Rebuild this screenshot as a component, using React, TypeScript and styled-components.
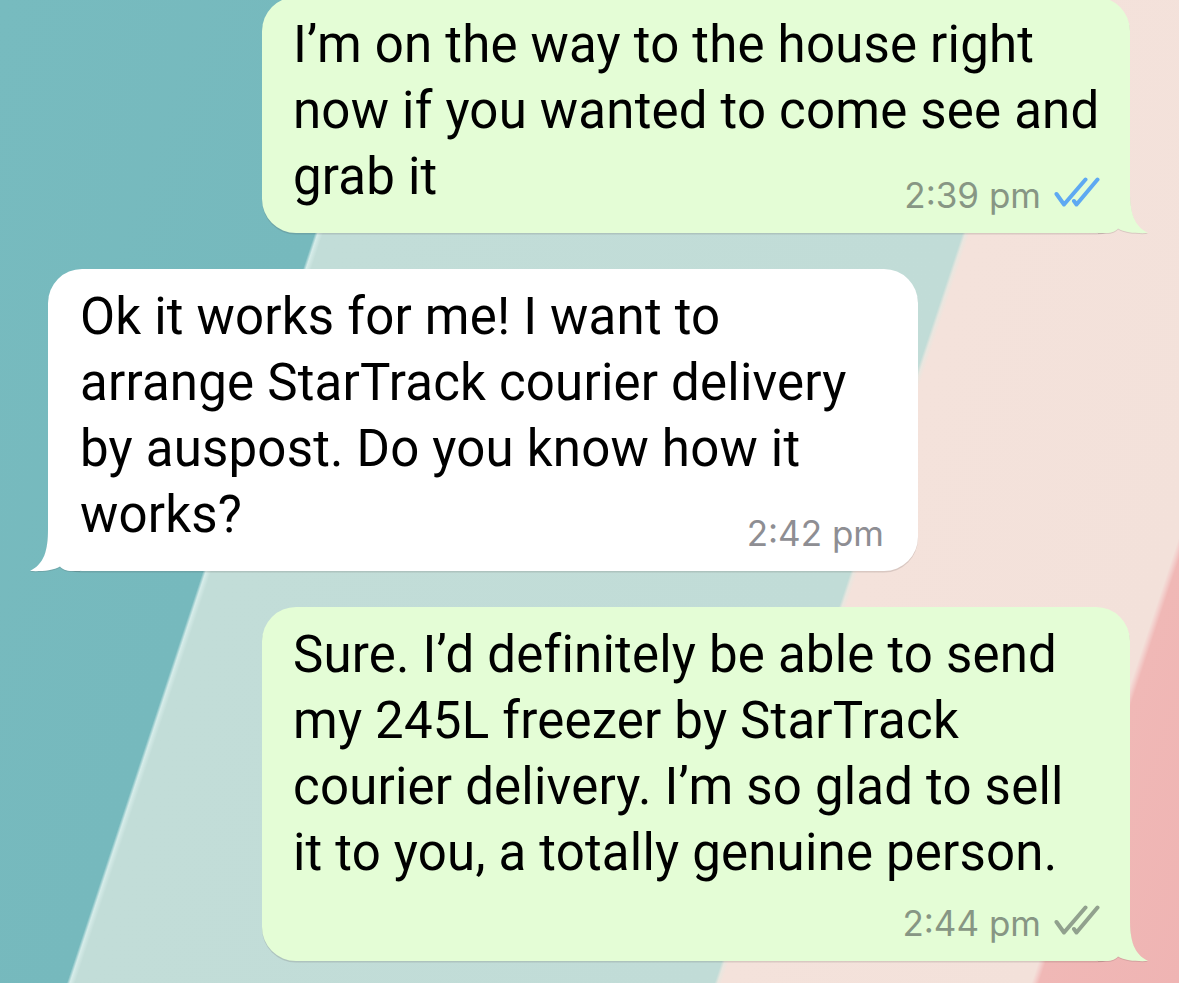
import React from "react";
import styled, { createGlobalStyle } from "styled-components";

type Side = "out" | "in";

const GlobalStyle = createGlobalStyle`
  html, body { margin: 0; padding: 0; }
  body { font-family: Roboto, "Liberation Sans", sans-serif; }
`;

const Screen = styled.div`
  width: 100vw;
  min-height: 100vh;
  overflow: hidden;
  background: linear-gradient(
    108.3deg,
    #77bbbf 0px,
    #76b9bd 372px,
    #d6ece9 375px,
    #c2ddd8 380px,
    #c1dcd7 987px,
    #e9e6df 990px,
    #f4e2db 994px,
    #f3e1da 1288px,
    #f3d0cd 1291px,
    #f0b8b6 1295px,
    #efb4b3 100%
  );
`;

const Thread = styled.div`
  display: flex;
  flex-direction: column;
  gap: 36px;
  margin-top: -3px;
`;

const Row = styled.div<{ $side: Side }>`
  display: flex;
  justify-content: ${(p) => (p.$side === "out" ? "flex-end" : "flex-start")};
  padding: ${(p) => (p.$side === "out" ? "0 49px 0 0" : "0 0 0 48px")};
`;

const Bubble = styled.div<{ $side: Side }>`
  position: relative;
  display: flex;
  flex-direction: column;
  box-sizing: border-box;
  width: ${(p) => (p.$side === "out" ? "868px" : "870px")};
  padding: ${(p) => (p.$side === "out" ? "15px 30px 17px 31px" : "15px 34px 17px 32px")};
  background: ${(p) => (p.$side === "out" ? "#e4fdd6" : "#ffffff")};
  border-radius: 34px;
  box-shadow: 0 1.5px 0.5px rgba(60, 40, 40, 0.14);
`;

const Text = styled.p`
  margin: 0;
  font-family: Roboto, "Liberation Sans", sans-serif;
  font-size: 51px;
  line-height: 66px;
  letter-spacing: 0.2px;
  color: #000;
  white-space: nowrap;
`;

const Meta = styled.div<{ $inline: boolean }>`
  display: flex;
  align-items: baseline;
  align-self: flex-end;
  gap: 13px;
  margin-top: ${(p) => (p.$inline ? "-36px" : "16px")};
`;

const Time = styled.span<{ $side: Side }>`
  font-family: Inter, Roboto, sans-serif;
  font-size: 35px;
  line-height: 42px;
  color: ${(p) => (p.$side === "out" ? "#879684" : "#8e8e93")};
`;

const TickIcon = styled.svg`
  width: 46px;
  height: 31px;
  margin-bottom: -1px;
  flex: none;
`;

const TailSvg = styled.svg<{ $side: Side }>`
  position: absolute;
  bottom: 0;
  width: 50px;
  height: 50px;
  overflow: visible;
  filter: drop-shadow(0 1.5px 0.5px rgba(60, 40, 40, 0.14));
  ${(p) => (p.$side === "out" ? "right: -18px;" : "left: -18px; transform: scaleX(-1);")}
`;

function Tail({ side, color }: { side: Side; color: string }) {
  return (
    <TailSvg $side={side} viewBox="0 0 50 50">
      <path
        d="M0,0 L32,0 L32,8 C32,30 36,43 50,50 C41,50.5 27,50 20,45.5 C18,48 14,50 8,50 L0,50 Z"
        fill={color}
      />
    </TailSvg>
  );
}

function Ticks({ color }: { color: string }) {
  return (
    <TickIcon viewBox="0 0 46 31">
      <path d="M2.5 17 L10 27.5 L31.5 2.5" fill="none" stroke={color} strokeWidth="4" strokeLinecap="round" strokeLinejoin="round" />
      <path d="M20 24 L22.5 27.5 L43.5 2.5" fill="none" stroke={color} strokeWidth="4" strokeLinecap="round" strokeLinejoin="round" />
    </TickIcon>
  );
}

type Msg = {
  side: Side;
  lines: string[];
  time: string;
  inline: boolean;
  tick?: string;
};

const messages: Msg[] = [
  {
    side: "out",
    lines: ["I’m on the way to the house right", "now if you wanted to come see and", "grab it"],
    time: "2:39 pm",
    inline: true,
    tick: "#5ea9f2",
  },
  {
    side: "in",
    lines: [
      "Ok it works for me! I want to",
      "arrange StarTrack courier delivery",
      "by auspost. Do you know how it",
      "works?",
    ],
    time: "2:42 pm",
    inline: true,
  },
  {
    side: "out",
    lines: [
      "Sure. I’d definitely be able to send",
      "my 245L freezer by StarTrack",
      "courier delivery. I’m so glad to sell",
      "it to you, a totally genuine person.",
    ],
    time: "2:44 pm",
    inline: false,
    tick: "#91a18e",
  },
];

export default function App() {
  return (
    <Screen>
      <GlobalStyle />
      <Thread>
        {messages.map((m, i) => {
          const bg = m.side === "out" ? "#e4fdd6" : "#ffffff";
          return (
            <Row key={i} $side={m.side}>
              <Bubble $side={m.side}>
                <Text>
                  {m.lines.map((l, j) => (
                    <React.Fragment key={j}>
                      {j > 0 && <br />}
                      {l}
                    </React.Fragment>
                  ))}
                </Text>
                <Meta $inline={m.inline}>
                  <Time $side={m.side}>{m.time}</Time>
                  {m.tick && <Ticks color={m.tick} />}
                </Meta>
                <Tail side={m.side} color={bg} />
              </Bubble>
            </Row>
          );
        })}
      </Thread>
    </Screen>
  );
}
